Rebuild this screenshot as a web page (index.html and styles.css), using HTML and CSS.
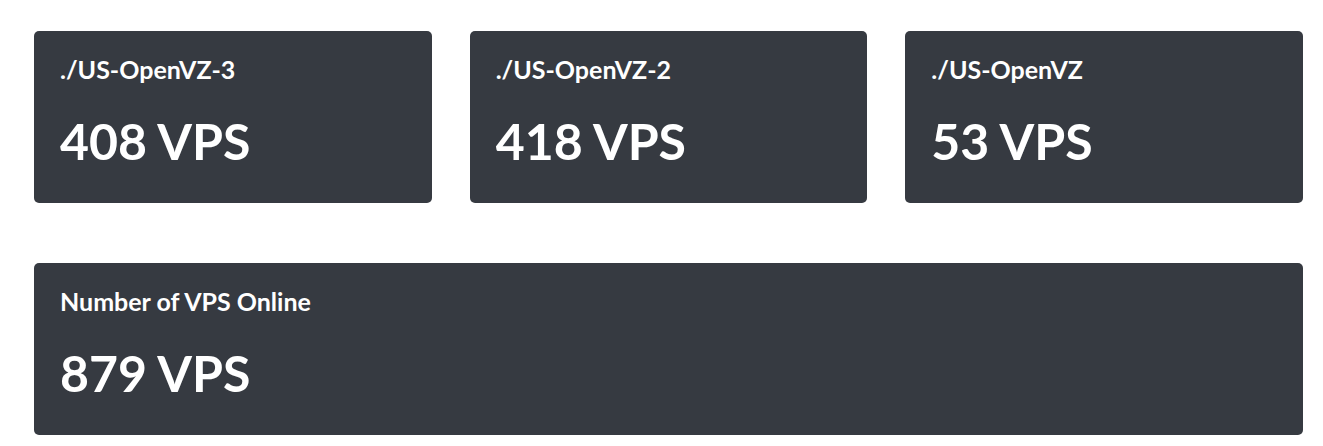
FILE: index.html
```html
<!DOCTYPE html>
<html>
<head>
<meta charset="utf-8">
<link rel="stylesheet" href="styles.css">
</head>
<body>
<div class="page">
  <div class="row three">
    <div class="card"><div class="label">./US-OpenVZ-3</div><div class="value">408 VPS</div></div>
    <div class="card"><div class="label">./US-OpenVZ-2</div><div class="value">418 VPS</div></div>
    <div class="card"><div class="label">./US-OpenVZ</div><div class="value">53 VPS</div></div>
  </div>
  <div class="row one">
    <div class="card"><div class="label">Number of VPS Online</div><div class="value">879 VPS</div></div>
  </div>
</div>
</body>
</html>
```
FILE: styles.css
```css
html, body { margin: 0; padding: 0; background: #ffffff; }
body { font-family: Lato, "Open Sans", sans-serif; }
.page { padding: 31px 20px 0 34px; display: flex; flex-direction: column; gap: 60px; }
.row { display: grid; gap: 38px; }
.row.three { grid-template-columns: 1fr 1fr 1fr; }
.row.one { grid-template-columns: 1fr; }
.card {
  background: #363a41;
  border-radius: 5px;
  height: 172px;
  box-sizing: border-box;
  padding: 23px 26px 0 26px;
  color: #ffffff;
}
.label { font-weight: 700; font-size: 25px; line-height: 30px; }
.value { font-weight: 700; font-size: 50px; line-height: 60px; margin-top: 27px; }
```
